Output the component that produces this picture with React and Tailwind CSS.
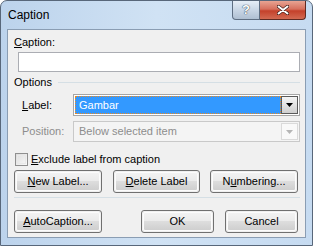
const font = { fontFamily: '"Liberation Sans", Arial, sans-serif' }

function Btn({ children, className = '' }) {
  return (
    <div className={`h-[23px] rounded-[3px] border border-[#707070] p-px ${className}`}>
      <div className="flex h-full items-center justify-center rounded-[2px] border border-[#fcfcfc] bg-[linear-gradient(#f2f2f2_0%,#ebebeb_45%,#dddddd_50%,#cfcfcf_100%)] text-[11px] text-black">
        {children}
      </div>
    </div>
  )
}

function Arrow({ color }) {
  return (
    <svg width="7" height="4" viewBox="0 0 7 4">
      <path d="M0 0h7L3.5 4z" fill={color} />
    </svg>
  )
}

export default function App() {
  return (
    <div style={font} className="relative flex h-[246px] w-[313px] flex-col overflow-hidden rounded-t-[7px] border border-[#58677a] bg-[linear-gradient(90deg,#bcd3ec,#d0e2f4_50%,#c6dbf1)]">
      {/* title bar */}
      <div className="flex h-[28px] shrink-0 items-start">
        <span className="ml-[7px] mt-[7px] text-[12px] leading-[15px] text-black">Caption</span>
        <div className="ml-auto mr-[6px] flex h-[19px]">
          <div className="flex w-[28px] items-center justify-center rounded-bl-[4px] border border-t-0 border-[#5e6e82] bg-[linear-gradient(#e6eef7,#c9d6e5_50%,#afbfd2)] text-[13px] font-bold text-white [text-shadow:0_0_1px_#2b3a4d,0_0_1px_#2b3a4d]">
            ?
          </div>
          <div className="flex w-[46px] items-center justify-center rounded-br-[4px] border border-l-0 border-t-0 border-[#5e2a22] bg-[linear-gradient(#e8a493,#d6705d_45%,#c4412b_55%,#d26a52)]">
            <svg width="12" height="10" viewBox="0 0 12 10">
              <path d="M1.5 1.5l9 7M10.5 1.5l-9 7" stroke="#3b1d18" strokeWidth="3.4" strokeLinecap="round" />
              <path d="M1.5 1.5l9 7M10.5 1.5l-9 7" stroke="#fff" strokeWidth="2" strokeLinecap="round" />
            </svg>
          </div>
        </div>
      </div>

      {/* client area */}
      <div className="mx-[6px] h-[209px] shrink-0 border border-[#8a9db3] bg-[#f0f0f0] pl-[6px] pr-[5px] text-[11px] leading-[13px] text-black">
        <div className="mt-[6px]"><u>C</u>aption:</div>
        <div className="ml-[4px] mt-[3px] h-[20px] border border-[#abadb3] bg-white" />

        <div className="mt-[4px] flex items-center">
          <span>Options</span>
          <div className="ml-[6px] h-px flex-1 bg-[#d5dfe5]" />
        </div>

        <div className="mt-[5px] flex items-center">
          <span className="ml-[8px] w-[51px]"><u>L</u>abel:</span>
          <div className="flex h-[22px] flex-1 border border-[#a6a6a6] bg-white p-px">
            <div className="flex flex-1 items-center border border-dotted border-[#f08a1c] bg-[#3399ff] pl-[3px] text-white">Gambar</div>
            <div className="flex w-[17px] items-center justify-center border border-[#5a5a5a] bg-[linear-gradient(#f4f4f4,#e2e2e2_50%,#cfcfcf)]">
              <Arrow color="#000" />
            </div>
          </div>
        </div>

        <div className="mt-[5px] flex items-center text-[#8d8d8d]">
          <span className="ml-[8px] w-[51px]">Position:</span>
          <div className="flex h-[21px] flex-1 border border-[#c9c9c9] bg-[#f4f4f4] p-px">
            <div className="flex flex-1 items-center pl-[4px] text-[#8d8d8d]">Below selected item</div>
            <div className="flex w-[17px] items-center justify-center border border-[#dadada] bg-[#f9f9f9]">
              <Arrow color="#b5b5b5" />
            </div>
          </div>
        </div>

        <div className="mt-[11px] flex items-center">
          <div className="ml-px h-[13px] w-[13px] border border-[#8f8f8f] bg-[linear-gradient(135deg,#dcdcdc,#f9f9f9)] p-px">
            <div className="h-full w-full border border-[#e8e8e8]" />
          </div>
          <span className="ml-[3px]"><u>E</u>xclude label from caption</span>
        </div>

        <div className="mt-[4px] flex">
          <Btn className="w-[88px]"><span><u>N</u>ew Label...</span></Btn>
          <Btn className="ml-[11px] w-[87px]"><span><u>D</u>elete Label</span></Btn>
          <Btn className="ml-[10px] w-[88px]"><span>N<u>u</u>mbering...</span></Btn>
        </div>

        <div className="mt-[4px] h-px w-[286px] bg-[#d5dfe5]" />

        <div className="mt-[12px] flex">
          <Btn className="w-[88px]"><span><u>A</u>utoCaption...</span></Btn>
          <Btn className="ml-[39px] w-[73px]"><span>OK</span></Btn>
          <Btn className="ml-[11px] w-[73px]"><span>Cancel</span></Btn>
        </div>
      </div>
    </div>
  )
}
